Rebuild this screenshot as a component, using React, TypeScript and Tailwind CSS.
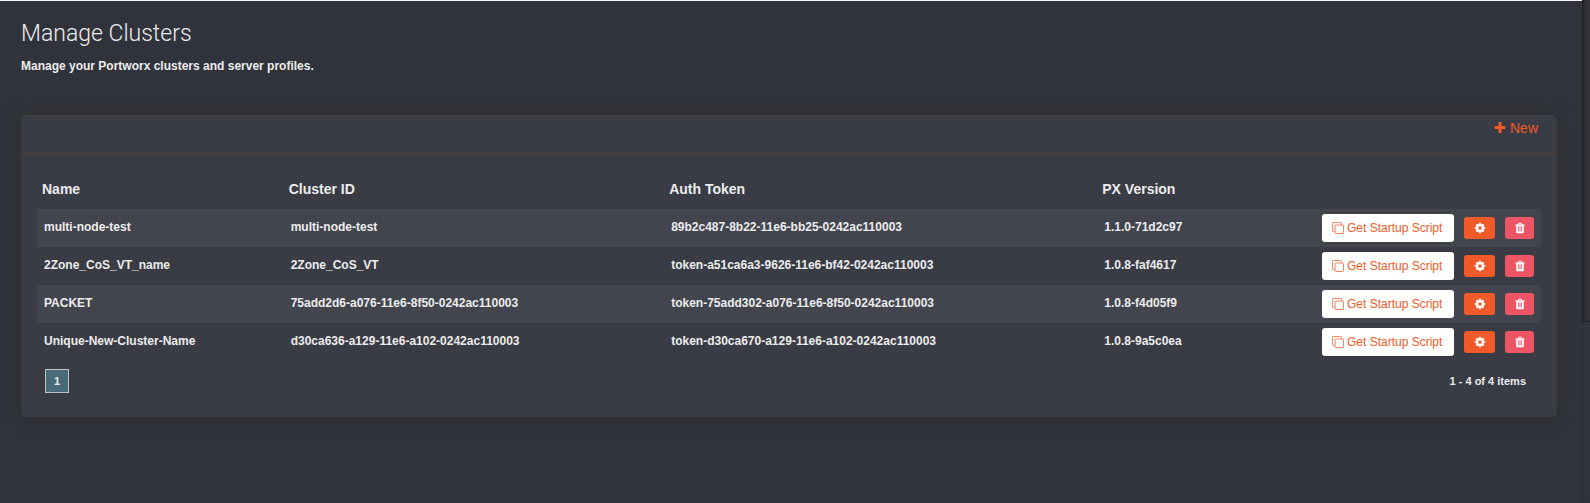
import React from "react";

type Cluster = { name: string; id: string; token: string; version: string };

const clusters: Cluster[] = [
  { name: "multi-node-test", id: "multi-node-test", token: "89b2c487-8b22-11e6-bb25-0242ac110003", version: "1.1.0-71d2c97" },
  { name: "2Zone_CoS_VT_name", id: "2Zone_CoS_VT", token: "token-a51ca6a3-9626-11e6-bf42-0242ac110003", version: "1.0.8-faf4617" },
  { name: "PACKET", id: "75add2d6-a076-11e6-8f50-0242ac110003", token: "token-75add302-a076-11e6-8f50-0242ac110003", version: "1.0.8-f4d05f9" },
  { name: "Unique-New-Cluster-Name", id: "d30ca636-a129-11e6-a102-0242ac110003", token: "token-d30ca670-a129-11e6-a102-0242ac110003", version: "1.0.8-9a5c0ea" },
];

function PlusIcon() {
  return (
    <svg viewBox="0 0 1792 1792" className="size-[14px] fill-current" aria-hidden="true">
      <path d="M1600 736v192q0 40-28 68t-68 28h-416v416q0 40-28 68t-68 28h-192q-40 0-68-28t-28-68v-416h-416q-40 0-68-28t-28-68v-192q0-40 28-68t68-28h416v-416q0-40 28-68t68-28h192q40 0 68 28t28 68v416h416q40 0 68 28t28 68z" />
    </svg>
  );
}

function CogIcon() {
  return (
    <svg viewBox="0 0 1792 1792" className="size-3 fill-current" aria-hidden="true">
      <path d="M1152 896q0-106-75-181t-181-75-181 75-75 181 75 181 181 75 181-75 75-181zm512-109v222q0 12-8 23t-20 13l-185 28q-19 54-39 91 35 50 107 138 10 12 10 25t-9 23q-27 37-99 108t-94 71q-12 0-26-9l-138-108q-44 23-91 38-16 136-29 186-7 28-36 28h-222q-14 0-24.500-8.500t-11.500-21.500l-28-184q-49-16-90-37l-141 107q-10 9-25 9-14 0-25-11-126-114-165-168-7-10-7-23 0-12 8-23 15-21 51-66.500t54-70.500q-27-50-41-99l-183-27q-13-2-21-12.500t-8-23.500v-222q0-12 8-23t19-13l186-28q14-46 39-92-40-57-107-138-10-12-10-24 0-10 9-23 26-36 98.500-107.500t94.500-71.500q13 0 26 10l138 107q44-23 91-38 16-136 29-186 7-28 36-28h222q14 0 24.500 8.500t11.500 21.500l28 184q49 16 90 37l142-107q9-9 24-9 13 0 25 10 129 119 165 170 7 8 7 22 0 12-8 23-15 21-51 66.500t-54 70.500q26 50 41 98l183 28q13 2 21 12.500t8 23.500z" />
    </svg>
  );
}

function TrashIcon() {
  return (
    <svg viewBox="0 0 1792 1792" className="size-3 fill-current" aria-hidden="true">
      <path d="M704 1376v-704q0-14-9-23t-23-9h-64q-14 0-23 9t-9 23v704q0 14 9 23t23 9h64q14 0 23-9t9-23zm256 0v-704q0-14-9-23t-23-9h-64q-14 0-23 9t-9 23v704q0 14 9 23t23 9h64q14 0 23-9t9-23zm256 0v-704q0-14-9-23t-23-9h-64q-14 0-23 9t-9 23v704q0 14 9 23t23 9h64q14 0 23-9t9-23zm-544-992h448l-48-117q-7-9-17-11h-317q-10 2-17 11zm928 32v64q0 14-9 23t-23 9h-96v948q0 83-47 143.500t-113 60.500h-832q-66 0-113-58.500t-47-141.500v-952h-96q-14 0-23-9t-9-23v-64q0-14 9-23t23-9h309l70-167q15-37 54-63t79-26h320q40 0 79 26t54 63l70 167h309q14 0 23 9t9 23z" />
    </svg>
  );
}

function CopyIcon() {
  return (
    <svg viewBox="0 0 13 13" className="size-3 shrink-0 fill-none stroke-current" strokeWidth="0.8" aria-hidden="true">
      <path d="M3 10.300H1.300a.8.8 0 0 1-.8-.8V1.300a.8.8 0 0 1 .8-.8h8.200a.8.8 0 0 1 .8.8V3" />
      <rect x="3.300" y="3.300" width="9.200" height="9.200" rx="0.800" />
    </svg>
  );
}

export default function App() {
  return (
    <div className="flex min-h-screen bg-[#30333b] font-['Liberation_Sans',Arial,sans-serif] text-[#ececec]">
      <main className="min-w-0 flex-1 border-t border-[#f0f0f0] pr-[25px] pb-8 pl-[21px]">
        <h1 className="mt-[17px] font-['Roboto','Liberation_Sans',sans-serif] text-[23px] leading-8 font-light">Manage Clusters</h1>
        <p className="mt-2 text-[12px] leading-4 font-bold">Manage your Portworx clusters and server profiles.</p>

        <section className="mt-[41px] rounded-[5px] bg-[#3a3c45] pb-6 shadow-[0_0_12px_4px_#303134]">
          <header className="mx-px flex h-[39px] items-start justify-end border-b border-[#5f392f] pt-[3px] pr-[18px]">
            <button type="button" className="flex items-center gap-[3px] text-[14px] leading-5 text-[#f05a28]">
              <PlusIcon />
              New
            </button>
          </header>

          <div className="px-4 pt-5">
            <table className="w-full table-fixed border-collapse text-left font-bold">
              <colgroup>
                <col className="w-[16.4%]" />
                <col className="w-[25.3%]" />
                <col className="w-[28.8%]" />
                <col />
                <col className="w-[226px]" />
              </colgroup>
              <thead>
                <tr className="h-[35px] text-[14px] leading-5">
                  <th className="px-[5px] pb-[6px]">Name</th>
                  <th className="px-[5px] pb-[6px]">Cluster ID</th>
                  <th className="px-[5px] pb-[6px]">Auth Token</th>
                  <th className="px-[5px] pb-[6px]">PX Version</th>
                  <td />
                </tr>
              </thead>
              <tbody>
                {clusters.map((c) => (
                  <tr key={c.name} className="h-[38px] text-[12px] leading-4 odd:bg-[#43454e]">
                    <td className="px-[7px] pb-[2px]">{c.name}</td>
                    <td className="px-[7px] pb-[2px]">{c.id}</td>
                    <td className="px-[7px] pb-[2px]">{c.token}</td>
                    <td className="px-[7px] pb-[2px]">{c.version}</td>
                    <td className="pr-[7px]">
                      <div className="flex items-center justify-end gap-[10px]">
                        <button type="button" className="flex h-7 w-[132px] items-center gap-[3px] rounded-[3px] bg-white pl-[10px] font-normal whitespace-nowrap text-[#f05a28]">
                          <CopyIcon />
                          Get Startup Script
                        </button>
                        <button type="button" aria-label="Settings" className="flex h-[22px] w-[31px] items-center justify-center rounded-[3px] bg-[#f05a28] text-white">
                          <CogIcon />
                        </button>
                        <button type="button" aria-label="Delete" className="flex h-[22px] w-[29px] items-center justify-center rounded-[3px] bg-[#ed5565] text-white">
                          <TrashIcon />
                        </button>
                      </div>
                    </td>
                  </tr>
                ))}
              </tbody>
            </table>

            <nav aria-label="Pagination" className="flex items-center justify-between pt-2 pr-[15px] pl-2 text-[11px] font-bold">
              <button type="button" aria-current="page" className="size-6 border border-[#bfc3c3] bg-[#486a79]">1</button>
              <span>1 - 4 of 4 items</span>
            </nav>
          </div>
        </section>
      </main>

      <div className="w-2 bg-[#30333b] shadow-[inset_1px_0_1px_#2a2c31]" aria-hidden="true">
        <div className="h-[64vh] bg-[#313338] shadow-[inset_2px_-1px_2px_#222326]" />
      </div>
    </div>
  );
}
